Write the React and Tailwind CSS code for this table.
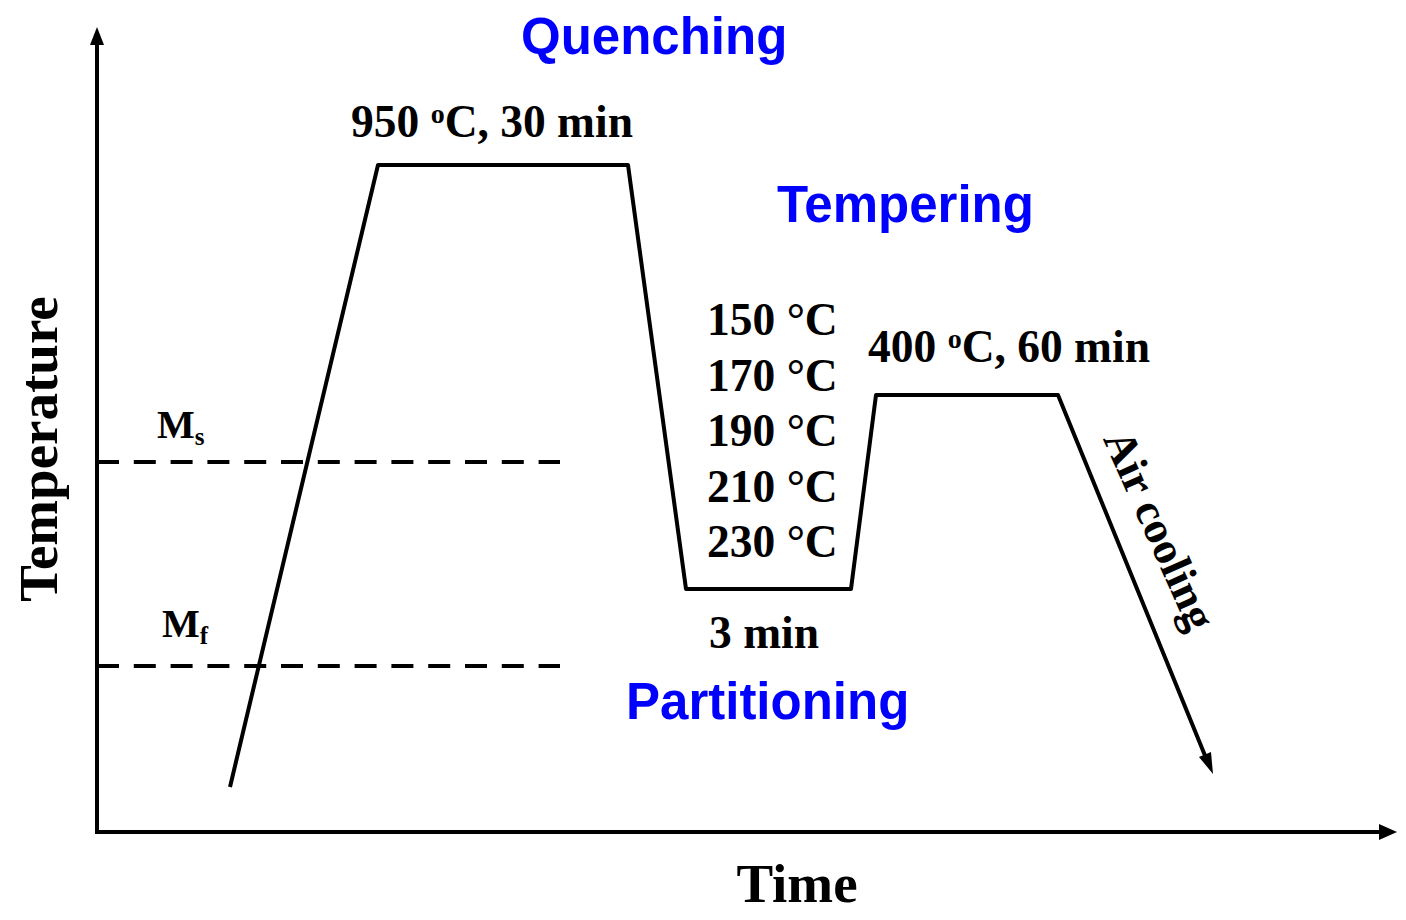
import React from "react";

const serif = "'Liberation Serif', 'Times New Roman', serif";
const sans = "'Liberation Sans', Arial, sans-serif";

// dashed Ms / Mf lines
const Dashed = ({ y }) => (
  <line x1="97" y1={y} x2="560" y2={y} stroke="#000" strokeWidth="4" strokeDasharray="22 14.8" />
);

const tempLabels = ["150", "170", "190", "210", "230"];

export default function App() {
  return (
    <div className="w-[1406px] h-[920px] bg-white">
      <svg width="1406" height="920" viewBox="0 0 1406 920" className="block">
        {/* axes */}
        <line x1="97" y1="40" x2="97" y2="834" stroke="#000" strokeWidth="4" />
        <polygon points="97,27 90,45 104,45" fill="#000" />
        <line x1="95" y1="832" x2="1382" y2="832" stroke="#000" strokeWidth="4" />
        <polygon points="1397,832 1379,824 1379,840" fill="#000" />

        <Dashed y={462} />
        <Dashed y={666} />

        {/* heat treatment path */}
        <polyline
          points="230,787 378,165 628,165 686,589 851,589 876,395 1058,395 1206,758"
          fill="none"
          stroke="#000"
          strokeWidth="4"
          strokeLinejoin="round"
        />
        <polygon points="1213,774 1199,757 1211,752" fill="#000" />

        {/* blue stage names */}
        <g fill="#0000ff" fontFamily={sans} fontWeight="700" fontSize="51">
          <text x="521" y="54">Quenching</text>
          <text x="777" y="222">Tempering</text>
          <text x="626" y="719">Partitioning</text>
        </g>

        {/* black annotations */}
        <g fill="#000" fontFamily={serif} fontWeight="700" fontSize="45.5">
          <text x="351" y="137">
            950 <tspan fontSize="28" dy="-14">o</tspan>
            <tspan dy="14">C, 30 min</tspan>
          </text>
          {tempLabels.map((t, i) => (
            <text key={t} x="707" y={335 + i * 55.5}>
              {t} °C
            </text>
          ))}
          <text x="868" y="362">
            400 <tspan fontSize="28" dy="-14">o</tspan>
            <tspan dy="14">C, 60 min</tspan>
          </text>
          <text x="709" y="648">3 min</text>
        </g>

        <g fill="#000" fontFamily={serif} fontWeight="700" fontSize="40">
          <text x="157" y="438">
            M<tspan fontSize="25" dy="7">s</tspan>
          </text>
          <text x="162" y="637">
            M<tspan fontSize="25" dy="7">f</tspan>
          </text>
        </g>

        <g fill="#000" fontFamily={serif} fontWeight="700" fontSize="55">
          <text x="797" y="902" textAnchor="middle">Time</text>
          <text transform="translate(57,449) rotate(-90)" textAnchor="middle">
            Temperature
          </text>
        </g>

        <text
          transform="translate(1146,536) rotate(66)"
          textAnchor="middle"
          fill="#000"
          fontFamily={serif}
          fontWeight="700"
          fontSize="45"
        >
          Air cooling
        </text>
      </svg>
    </div>
  );
}
